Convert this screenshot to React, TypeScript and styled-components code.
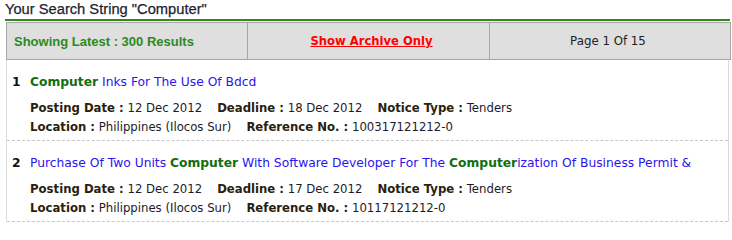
import React from 'react';
import styled, { createGlobalStyle } from 'styled-components';

interface ITender {
  no: number;
  title: string;
  postingDate: string;
  deadline: string;
  noticeType: string;
  location: string;
  reference: string;
}

const KEYWORD = 'Computer';

const tenders: ITender[] = [
  {
    no: 1,
    title: 'Computer Inks For The Use Of Bdcd',
    postingDate: '12 Dec 2012',
    deadline: '18 Dec 2012',
    noticeType: 'Tenders',
    location: 'Philippines (Ilocos Sur)',
    reference: '100317121212-0',
  },
  {
    no: 2,
    title: 'Purchase Of Two Units Computer With Software Developer For The Computerization Of Business Permit &',
    postingDate: '12 Dec 2012',
    deadline: '17 Dec 2012',
    noticeType: 'Tenders',
    location: 'Philippines (Ilocos Sur)',
    reference: '10117121212-0',
  },
];

// split the title so every hit on the keyword is drawn in green
const highlight = (text: string) =>
  text.split(new RegExp(`(${KEYWORD})`)).map((part, i) =>
    part === KEYWORD ? <Hit key={i}>{part}</Hit> : <React.Fragment key={i}>{part}</React.Fragment>
  );

const App = () => {
  return (
    <>
      <GlobalStyle />
      <Page>
        <Heading>Your Search String "Computer"</Heading>
        <Toolbar>
          <ToolCell align="left">
            <Latest>Showing Latest : 300 Results</Latest>
          </ToolCell>
          <ToolCell>
            <ArchiveLink href="#">Show Archive Only</ArchiveLink>
          </ToolCell>
          <ToolCell>
            <PageInfo>Page 1 Of 15</PageInfo>
          </ToolCell>
        </Toolbar>
        <List>
          {tenders.map((t) => (
            <Item key={t.no}>
              <TitleRow>
                <Num>{t.no}</Num>
                <TitleLink href="#">{highlight(t.title)}</TitleLink>
              </TitleRow>
              <Meta>
                <MetaRow>
                  <Field><Label>Posting Date :</Label> {t.postingDate}</Field>
                  <Field><Label>Deadline :</Label> {t.deadline}</Field>
                  <Field><Label>Notice Type :</Label> {t.noticeType}</Field>
                </MetaRow>
                <MetaRow>
                  <Field><Label>Location :</Label> {t.location}</Field>
                  <Field><Label>Reference No. :</Label> {t.reference}</Field>
                </MetaRow>
              </Meta>
            </Item>
          ))}
        </List>
      </Page>
    </>
  );
};

const GlobalStyle = createGlobalStyle`
  body {
    margin: 0;
    background: #fff;
    font-family: "DejaVu Sans", Verdana, sans-serif;
  }
`;

const Page = styled.div`
  width: 725px;
  padding: 0 0 0 5px;
`;

const Heading = styled.div`
  font-family: "Liberation Sans", Arial, sans-serif;
  font-size: 14.7px;
  line-height: 19px;
  color: #1e1e30;
  -webkit-text-stroke: 0.25px #1e1e30;
  border-bottom: 2px solid #2f8a1e;
`;

const Toolbar = styled.div`
  display: grid;
  grid-template-columns: 240px 242px 1fr;
  margin: 1px 0 0 1px;
  width: 723px;
  height: 36px;
  border: 1px solid #a6a6a6;
  background: #dfdfdf;
`;

const ToolCell = styled.div<{ align?: 'left' | 'center' }>`
  display: flex;
  align-items: center;
  justify-content: ${({ align }) => (align === 'left' ? 'flex-start' : 'center')};
  padding-left: ${({ align }) => (align === 'left' ? '7px' : '0')};
  & + & {
    border-left: 1px solid #a6a6a6;
  }
`;

const Latest = styled.span`
  font-family: "Liberation Sans", Arial, sans-serif;
  font-weight: bold;
  font-size: 13px;
  color: #2b8a20;
`;

const ArchiveLink = styled.a`
  font-size: 11.6px;
  font-weight: bold;
  color: #ff0000;
  text-decoration: underline;
  margin-left: 6px;
`;

const PageInfo = styled.span`
  font-size: 11.8px;
  color: #222;
  margin-right: 4px;
`;

const List = styled.div`
  margin-left: 1px;
  width: 721px;
  border-left: 1px solid #dcdcdc;
  border-right: 1px solid #dcdcdc;
`;

const Item = styled.div`
  padding: 14px 0 3px 5px;
  border-bottom: 1px dashed #c8c8c8;
`;

const TitleRow = styled.div`
  display: flex;
  align-items: baseline;
  font-size: 12.3px;
  line-height: 16px;
  white-space: nowrap;
`;

const Num = styled.span`
  width: 18px;
  font-weight: bold;
  color: #111;
`;

const TitleLink = styled.a`
  color: #2c14f0;
  text-decoration: none;
`;

const Hit = styled.b`
  color: #126e0e;
`;

const Meta = styled.div`
  margin-top: 9px;
  padding-left: 18px;
  font-size: 11.7px;
  line-height: 19px;
  color: #1e1a2a;
`;

const MetaRow = styled.div`
  display: flex;
  gap: 15px;
`;

const Field = styled.span`
  white-space: nowrap;
`;

const Label = styled.b`
  color: #2a1e0e;
`;

export default App;
